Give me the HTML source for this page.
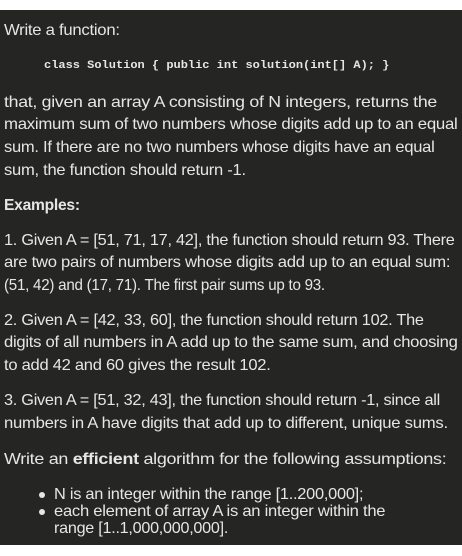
<!DOCTYPE html>
<html><head><meta charset="utf-8"><style>
html,body{margin:0;padding:0;background:#fff;width:462px;height:556px;overflow:hidden}
#box{position:absolute;left:0;top:10px;width:462px;height:535px;background:#252523}
.l{position:absolute;left:4px;white-space:nowrap;color:#e6e6e6;font-family:"Liberation Sans",Arial,sans-serif;font-size:15.6px;letter-spacing:-0.25px;line-height:20px;transform-origin:0 50%}
.c{font-family:"Liberation Mono",monospace;font-weight:bold;font-size:11px;letter-spacing:0;left:44px}
b{font-weight:bold}
.dot{position:absolute;width:6px;height:6px;border-radius:50%;background:#e6e6e6;left:39px}
</style></head><body>
<div id="box"></div>
<div class="l" style="top:21px;transform:scaleX(1.07)">Write a function:</div>
<div class="l c" style="top:56px;transform:scaleX(1.09)">class Solution { public int solution(int[] A); }</div>
<div class="l" style="top:93px;transform:scaleX(1.136)">that, given an array A consisting of N integers, returns the</div>
<div class="l" style="top:115px;transform:scaleX(1.076)">maximum sum of two numbers whose digits add up to an equal</div>
<div class="l" style="top:138px;transform:scaleX(1.059)">sum. If there are no two numbers whose digits have an equal</div>
<div class="l" style="top:161px;transform:scaleX(1.061)">sum, the function should return -1.</div>
<div class="l" style="top:196px"><b>Examples:</b></div>
<div class="l" style="top:231px;transform:scaleX(1.044)">1. Given A = [51, 71, 17, 42], the function should return 93. There</div>
<div class="l" style="top:253px;transform:scaleX(1.067)">are two pairs of numbers whose digits add up to an equal sum:</div>
<div class="l" style="top:276px;transform:scaleX(0.97)">(51, 42) and (17, 71). The first pair sums up to 93.</div>
<div class="l" style="top:311px;transform:scaleX(1.045)">2. Given A = [42, 33, 60], the function should return 102. The</div>
<div class="l" style="top:333px;transform:scaleX(1.066)">digits of all numbers in A add up to the same sum, and choosing</div>
<div class="l" style="top:356px;transform:scaleX(1.06)">to add 42 and 60 gives the result 102.</div>
<div class="l" style="top:391px;transform:scaleX(1.043)">3. Given A = [51, 32, 43], the function should return -1, since all</div>
<div class="l" style="top:414px;transform:scaleX(1.07)">numbers in A have digits that add up to different, unique sums.</div>
<div class="l" style="top:450px;transform:scaleX(1.148)">Write an <b>efficient</b> algorithm for the following assumptions:</div>
<div class="dot" style="top:492px"></div>
<div class="l" style="top:485px;left:54px;transform:scaleX(1.05)">N is an integer within the range [1..200,000];</div>
<div class="dot" style="top:509px"></div>
<div class="l" style="top:502px;left:54px;transform:scaleX(1.064)">each element of array A is an integer within the</div>
<div class="l" style="top:519px;left:54px;transform:scaleX(1.036)">range [1..1,000,000,000].</div>
</body></html>
